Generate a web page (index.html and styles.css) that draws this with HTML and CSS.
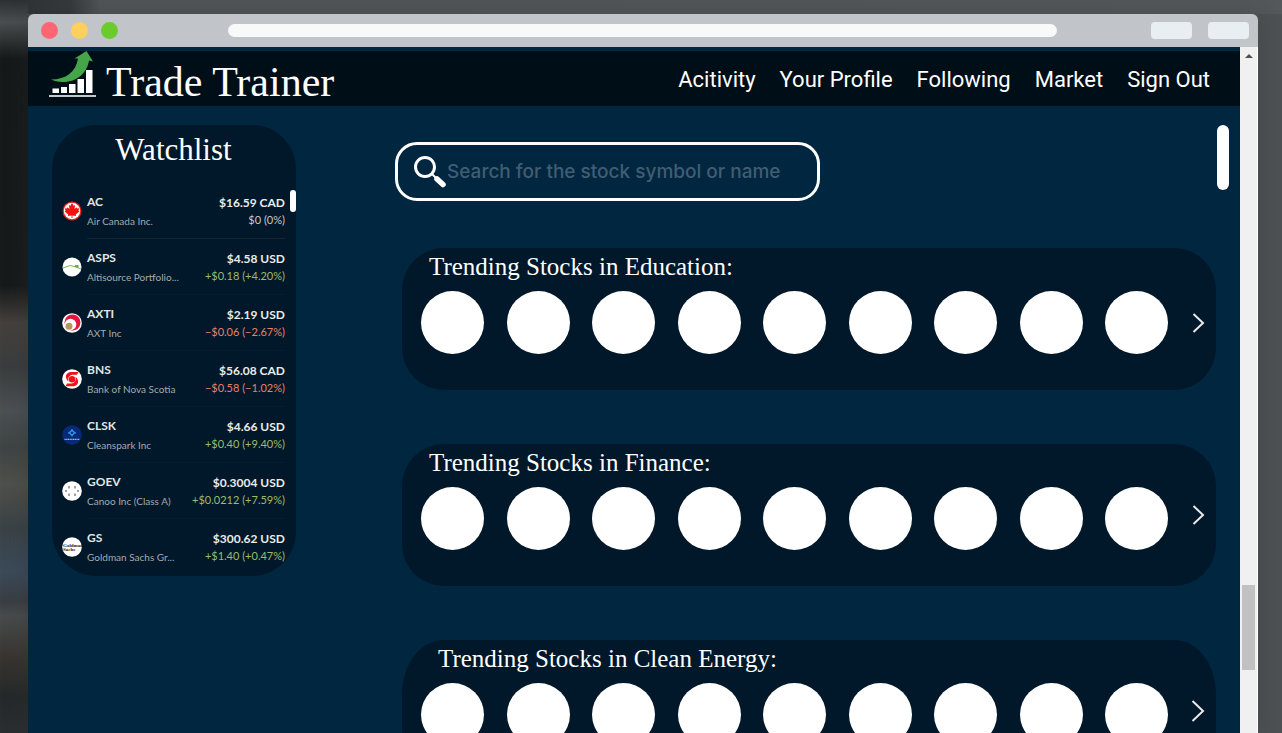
FILE: index.html
```html
<!DOCTYPE html>
<html lang="en">
<head>
<meta charset="utf-8">
<title>Trade Trainer</title>
<link rel="stylesheet" href="styles.css">
</head>
<body>
<div class="window">
  <div class="titlebar">
    <div class="lights"><span class="light light-red"></span><span class="light light-yellow"></span><span class="light light-green"></span></div>
    <input class="address" type="text" aria-label="Address">
    <div class="tools"><button class="tool" type="button" aria-label="Minimise"></button><button class="tool" type="button" aria-label="Menu"></button></div>
  </div>
  <div class="viewport">
    <div class="page">
      <header class="header">
        <a class="brand" href="#">
          <svg class="logo" viewBox="0 0 47 46" aria-hidden="true">
            <path fill="#45a549" d="M2 28.500C17 28.500 27 21 29 7.500L25.500 7.500 37.500 0l6.500 10.500-4-1C38 22 28 31 14 31 9 31 5 30 2 28.500z"/>
            <path fill="#fff" d="M3.500 37.500h6.500V42H3.500zM12 36h6v6h-6zM20 33h6.500v9H20zM28.500 28H35v14h-6.500zM37 19h6.500v23H37z"/>
            <path fill="#c4c8cc" d="M0 44h47v2H0z"/>
          </svg>
          <span class="brand-name">Trade Trainer</span>
        </a>
        <nav class="nav">
          <a href="#">Acitivity</a><a href="#">Your Profile</a><a href="#">Following</a><a href="#">Market</a><a href="#">Sign Out</a>
        </nav>
      </header>
      <main class="main">
        <aside class="watchlist">
          <h2 class="watch-title">Watchlist</h2>
          <ul class="watch-rows">
            <li class="row">
              <svg class="badge" viewBox="0 0 20 20" aria-hidden="true"><circle cx="10" cy="10" r="9.500" fill="#e8201c"/><circle cx="10" cy="10" r="8.200" fill="#fff"/><path fill="#f01410" d="M10 2l1.600 2.800 1.500-.7-.6 4 2-1.900.5 1.300 2.300-.3-.9 2.400 1 .8-3.700 3 .4 1.500-3.700-.5V17h-.8v-2.600l-3.700.5.4-1.500-3.700-3 1-.8-.9-2.400 2.300.3.500-1.300 2 1.900-.6-4 1.500.7z"/></svg>
              <div class="row-body"><div class="who"><b>AC</b><span>Air Canada Inc.</span></div><div class="worth"><b>$16.59 CAD</b><span>$0 (0%)</span></div></div>
            </li>
            <li class="row">
              <svg class="badge" viewBox="0 0 20 20" aria-hidden="true"><circle cx="10" cy="10" r="9.500" fill="#fff"/><path fill="none" stroke="#7cb850" d="M1 11l7-2.500 6 1.500 5 2"/><path fill="#6cae43" d="M13 8h3.500v3L13 10z"/></svg>
              <div class="row-body"><div class="who"><b>ASPS</b><span>Altisource Portfolio...</span></div><div class="worth up"><b>$4.58 USD</b><span>+$0.18 (+4.20%)</span></div></div>
            </li>
            <li class="row">
              <svg class="badge" viewBox="0 0 20 20" aria-hidden="true"><circle cx="10" cy="10" r="9.800" fill="#fff"/><circle cx="10.500" cy="9.500" r="8" fill="#e3173e"/><circle cx="8.500" cy="11.500" r="5.800" fill="#fff"/><circle cx="7" cy="13.300" r="3.500" fill="#b59a57"/></svg>
              <div class="row-body"><div class="who"><b>AXTI</b><span>AXT Inc</span></div><div class="worth down"><b>$2.19 USD</b><span>−$0.06 (−2.67%)</span></div></div>
            </li>
            <li class="row">
              <svg class="badge" viewBox="0 0 20 20" aria-hidden="true"><circle cx="10" cy="10" r="9.800" fill="#fff"/><circle cx="10" cy="10.200" r="3.200" fill="#ec111a"/><path fill="#ec111a" d="M16.500 3H9.500C5.500 3 3.500 5.500 4 8.500c.3 1.500 1.200 3 2.500 4-.8-3.500.5-6.300 4-6.800h4.500zM3.500 17.200h7c4 0 6-2.500 5.500-5.500-.3-1.500-1.200-3-2.500-4 .8 3.500-.5 6.300-4 6.800H5z"/></svg>
              <div class="row-body"><div class="who"><b>BNS</b><span>Bank of Nova Scotia</span></div><div class="worth down"><b>$56.08 CAD</b><span>−$0.58 (−1.02%)</span></div></div>
            </li>
            <li class="row">
              <svg class="badge" viewBox="0 0 20 20" aria-hidden="true"><circle cx="10" cy="10" r="9.800" fill="#06297a"/><path fill="none" stroke="#2f9be8" stroke-width="1.300" d="M10 5.200l2.600 2.600L10 10.400 7.400 7.800zM10 4v2.500M10 9v2.500M6 7.800h2.500M11.500 7.800H14"/><path stroke="#a9bde0" stroke-width="1.200" stroke-dasharray="1.200 .5" d="M2.500 14.300h15"/></svg>
              <div class="row-body"><div class="who"><b>CLSK</b><span>Cleanspark Inc</span></div><div class="worth up"><b>$4.66 USD</b><span>+$0.40 (+9.40%)</span></div></div>
            </li>
            <li class="row">
              <svg class="badge" viewBox="0 0 20 20" aria-hidden="true"><circle cx="10" cy="10" r="9.800" fill="#fff"/><path stroke="#45484c" d="M7 5v2.500M13 5v2.500M7 12.500V15M13 12.500V15M3 10h2M15 10h2"/></svg>
              <div class="row-body"><div class="who"><b>GOEV</b><span>Canoo Inc (Class A)</span></div><div class="worth up"><b>$0.3004 USD</b><span>+$0.0212 (+7.59%)</span></div></div>
            </li>
            <li class="row">
              <svg class="badge" viewBox="0 0 20 20" aria-hidden="true"><circle cx="10" cy="10" r="9.800" fill="#fff"/><text class="badge-text" x="1" y="9.500">Goldman</text><text class="badge-text" x="1" y="13.500">Sachs</text></svg>
              <div class="row-body"><div class="who"><b>GS</b><span>Goldman Sachs Gr...</span></div><div class="worth up"><b>$300.62 USD</b><span>+$1.40 (+0.47%)</span></div></div>
            </li>
          </ul>
          <span class="watch-thumb"></span>
        </aside>
        <div class="content">
          <label class="search">
            <svg class="glass" viewBox="0 0 34 34" aria-hidden="true"><circle cx="12" cy="12" r="9.500" fill="none" stroke="#fff" stroke-width="3"/><path stroke="#fff" stroke-width="2" d="M19 19l4 4"/><path stroke="#fff" stroke-width="5.500" stroke-linecap="round" d="M24 24l6 5.500"/></svg>
            <input class="search-input" type="search" aria-label="Search stocks" placeholder="Search for the stock symbol or name">
          </label>
          <section class="card">
            <h3 class="card-title">Trending Stocks in Education:</h3>
            <div class="strip">
              <div class="stocks"><i></i><i></i><i></i><i></i><i></i><i></i><i></i><i></i><i></i></div>
              <button class="next" type="button" aria-label="More education stocks"><svg viewBox="0 0 13 20" aria-hidden="true"><path d="M1.500 1L11 10l-9.500 9"/></svg></button>
            </div>
          </section>
          <section class="card">
            <h3 class="card-title">Trending Stocks in Finance:</h3>
            <div class="strip">
              <div class="stocks"><i></i><i></i><i></i><i></i><i></i><i></i><i></i><i></i><i></i></div>
              <button class="next next-high" type="button" aria-label="More finance stocks"><svg viewBox="0 0 13 20" aria-hidden="true"><path d="M1.500 1L11 10l-9.500 9"/></svg></button>
            </div>
          </section>
          <section class="card card-tall">
            <h3 class="card-title">Trending Stocks in Clean Energy:</h3>
            <div class="strip">
              <div class="stocks"><i></i><i></i><i></i><i></i><i></i><i></i><i></i><i></i><i></i></div>
              <button class="next next-high" type="button" aria-label="More clean energy stocks"><svg viewBox="0 0 13 20" aria-hidden="true"><path d="M.5 0L11 10 .5 20"/></svg></button>
            </div>
          </section>
        </div>
        <span class="page-thumb"></span>
      </main>
    </div>
    <div class="scrollbar">
      <svg class="scroll-up" viewBox="0 0 8 4" aria-hidden="true"><path fill="#505050" d="M4 0l4 4H0z"/></svg>
      <span class="scroll-before"></span><span class="scroll-thumb"></span><span class="scroll-after"></span>
    </div>
  </div>
</div>
</body>
</html>
```
FILE: styles.css
```css
* { box-sizing: border-box; }

body {
  margin: 0;
  height: 100vh;
  padding: 14px 24px 0 28px;
  overflow: hidden;
  font-family: Roboto, "Liberation Sans", sans-serif;
  color: #fff;
  background:
    linear-gradient(#2c3032 0%, #4a4e50 3%, #16191a 8%, #171a1b 39%, #45403d 44%, #3a3d3e 50%, #4b5053 56%, #3f4444 61%, #4f504a 66%, #3b4246 72%, #3b4a59 78%, #3a3e42 82%, #484b4d 84%, #38342f 90%, #25292b 95%, #2a2e30 100%) left / 28px 100% no-repeat,
    linear-gradient(90deg, #2c3032, #35393b 70px, #515557 100px, #54585a) top / 100% 14px no-repeat,
    #4e5153;
}

h2, h3, ul { margin: 0; padding: 0; font-weight: 400; }
ul { list-style: none; }
a { color: inherit; text-decoration: none; }
button { border: 0; padding: 0; background: none; }

.window { height: 100%; display: flex; flex-direction: column; border-radius: 6px 6px 0 0; overflow: hidden; box-shadow: 0 0 24px rgba(40, 46, 50, .3); }

.titlebar { flex: none; height: 33px; display: flex; align-items: center; justify-content: space-between; padding: 0 9px 0 13px; background: #c1c4c9; }
.lights { display: flex; gap: 13px; }
.light { width: 17px; height: 17px; border-radius: 50%; }
.light-red { background: #ff6673; }
.light-yellow { background: #ffd05c; }
.light-green { background: #6ccb2c; }
.address { flex: 1; min-width: 0; height: 13px; margin: 0 94px 0 110px; border: 0; border-radius: 7px; background: #f8faf9; }
.tools { display: flex; gap: 16px; }
.tool { width: 41px; height: 17px; border-radius: 4px; background: #e9eef2; }

.viewport { flex: 1; min-height: 0; display: flex; }
.page { flex: 1; min-width: 0; overflow: hidden; padding-top: 4px; background: #002640; }

.header { display: flex; align-items: center; justify-content: space-between; height: 55px; padding: 0 30px 0 21px; background: #000e18; }
.brand { display: flex; align-items: center; gap: 10px; margin-bottom: 10px; }
.logo { width: 47px; height: 46px; }
.brand-name { padding-top: 16px; font: 42px/44px "Liberation Serif", serif; }
.nav { display: flex; gap: 24px; font-size: 22px; line-height: 28px; padding-top: 2px; }

.main { display: flex; align-items: flex-start; padding: 19px 11px 0 24px; }

.watchlist { position: relative; flex: none; width: 244px; padding: 0 11px 13px 10px; border-radius: 44px; background: #001829; }
.watch-title { height: 58px; font: 31px/50px "Liberation Serif", serif; text-align: center; }
.watch-rows { height: 380px; overflow: hidden; font-family: Lato, sans-serif; }
.row { display: flex; align-items: center; gap: 5px; height: 56px; }
.badge { flex: none; width: 20px; height: 20px; }
.badge-text { font: bold 5px "Liberation Serif", serif; fill: #222; }
.row-body { flex: 1; min-width: 0; display: flex; justify-content: space-between; height: 56px; padding-top: 10px; border-bottom: 1px solid #041c2c; white-space: nowrap; }
.row:first-child .row-body { border-color: #14262f; }
.row b, .row span { display: block; }
.who b { font-size: 12px; line-height: 18px; font-weight: 700; color: #e6e6e4; }
.who span { font-size: 10px; line-height: 20px; color: #a6abae; }
.worth { text-align: right; }
.worth b { font-size: 12px; line-height: 20px; font-weight: 700; color: #ecebe8; }
.worth span { font-size: 11px; line-height: 14px; color: #c9c9c6; }
.worth.up span { color: #9fba70; }
.worth.down span { color: #e8806c; }
.watch-thumb { position: absolute; right: 0; top: 65px; width: 6px; height: 22px; border-radius: 3px; background: #fff; }

.content { flex: 1; min-width: 0; margin-left: 99px; padding-top: 17px; }
.search { display: flex; align-items: center; width: 425px; max-width: 100%; height: 59px; margin-bottom: 47px; padding: 0 15px; border: 3px solid #fff; border-radius: 22px; }
.glass { flex: none; width: 34px; height: 34px; }
.search-input { flex: 1; min-width: 0; padding: 0; border: 0; outline: 0; background: none; color: #fff; font: 500 19px/28px Inter, sans-serif; }
.search-input::placeholder { color: #405d73; opacity: 1; }

.card { height: 142px; margin: 0 0 54px 7px; padding: 0 11px 0 19px; border-radius: 42px; background: #001829; }
.card-tall { border-radius: 42px / 54px; }
.card-title { height: 43px; padding-left: 8px; font: 25px/38px "Liberation Serif", serif; white-space: nowrap; }
.card-tall .card-title { padding-left: 17px; }
.strip { display: flex; align-items: center; gap: 24px; }
.stocks { flex: 1; display: flex; justify-content: space-between; }
.stocks i { width: 63px; height: 63px; border-radius: 50%; background: #fff; }
.next { flex: none; width: 13px; }
.next-high { padding-bottom: 8px; }
.next svg { display: block; width: 13px; height: 20px; overflow: visible; fill: none; stroke: #e8eaec; stroke-width: 2; }

.page-thumb { flex: none; width: 12px; height: 65px; margin-left: 1px; border-radius: 6px; background: #fff; }

.scrollbar { flex: none; width: 18px; display: flex; flex-direction: column; align-items: center; padding-top: 7px; border-right: 1px solid #fff; background: #f0f0f0; }
.scroll-up { width: 8px; height: 4px; }
.scroll-before { flex: 527; }
.scroll-thumb { flex: 85; width: 13px; background: #c1c1c1; }
.scroll-after { flex: 63; }
```
